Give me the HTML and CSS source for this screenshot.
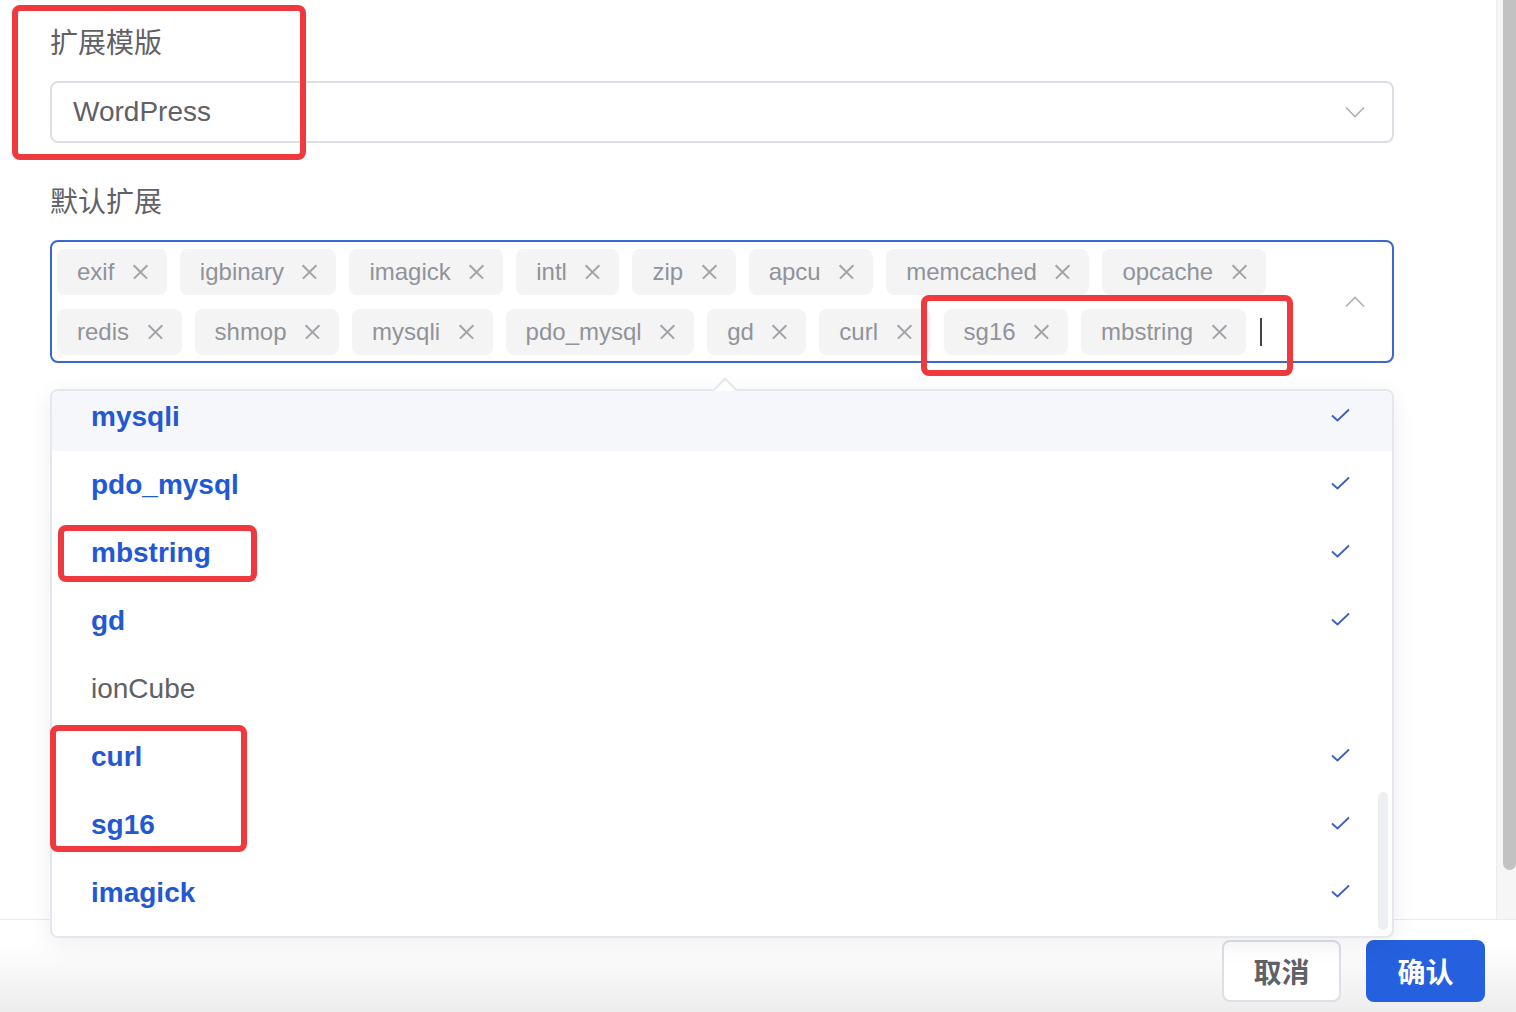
FILE: index.html
```html
<!DOCTYPE html>
<html lang="zh-CN">
<head>
    <meta charset="UTF-8">
    <title>扩展设置</title>
    <link rel="stylesheet" href="styles.css">
</head>
<body>
    <div class="dialog">
        <!-- 表单区 -->
        <div class="dialog-body">
            <div class="form">
                <div class="form-label">扩展模版</div>
                <div class="select">
                    <span class="select-value">WordPress</span>
                    <svg class="select-arrow" width="20" height="12" viewBox="0 0 20 12"><path d="M1 1.5L10 10.5L19 1.5" fill="none" stroke="#aeb1b6" stroke-width="1.6"/></svg>
                </div>

                <div class="form-label form-label-next">默认扩展</div>
                <div class="multi">
                    <div class="tags">
                        <span class="tag">exif<i class="tag-close"></i></span>
                        <span class="tag">igbinary<i class="tag-close"></i></span>
                        <span class="tag">imagick<i class="tag-close"></i></span>
                        <span class="tag">intl<i class="tag-close"></i></span>
                        <span class="tag">zip<i class="tag-close"></i></span>
                        <span class="tag">apcu<i class="tag-close"></i></span>
                        <span class="tag">memcached<i class="tag-close"></i></span>
                        <span class="tag">opcache<i class="tag-close"></i></span>
                        <span class="tag">redis<i class="tag-close"></i></span>
                        <span class="tag">shmop<i class="tag-close"></i></span>
                        <span class="tag">mysqli<i class="tag-close"></i></span>
                        <span class="tag">pdo_mysql<i class="tag-close"></i></span>
                        <span class="tag">gd<i class="tag-close"></i></span>
                        <span class="tag">curl<i class="tag-close"></i></span>
                        <span class="tag">sg16<i class="tag-close"></i></span>
                        <span class="tag">mbstring<i class="tag-close"></i></span>
                        <span class="cursor"></span>
                    </div>
                    <svg class="multi-arrow" width="20" height="12" viewBox="0 0 20 12"><path d="M1 10.5L10 1.5L19 10.5" fill="none" stroke="#aeb1b6" stroke-width="1.6"/></svg>

                    <!-- 下拉选项 -->
                    <div class="dropdown">
                        <div class="dropdown-arrow"></div>
                        <div class="options">
                            <div class="option selected hover">mysqli<svg class="check" width="19" height="14" viewBox="0 0 19 14"><path d="M1 7.5L6.5 12.5L18 1.5" fill="none" stroke="#3c5fbf" stroke-width="1.8"/></svg></div>
                            <div class="option selected">pdo_mysql<svg class="check" width="19" height="14" viewBox="0 0 19 14"><path d="M1 7.5L6.5 12.5L18 1.5" fill="none" stroke="#3c5fbf" stroke-width="1.8"/></svg></div>
                            <div class="option selected">mbstring<svg class="check" width="19" height="14" viewBox="0 0 19 14"><path d="M1 7.5L6.5 12.5L18 1.5" fill="none" stroke="#3c5fbf" stroke-width="1.8"/></svg></div>
                            <div class="option selected">gd<svg class="check" width="19" height="14" viewBox="0 0 19 14"><path d="M1 7.5L6.5 12.5L18 1.5" fill="none" stroke="#3c5fbf" stroke-width="1.8"/></svg></div>
                            <div class="option">ionCube</div>
                            <div class="option selected">curl<svg class="check" width="19" height="14" viewBox="0 0 19 14"><path d="M1 7.5L6.5 12.5L18 1.5" fill="none" stroke="#3c5fbf" stroke-width="1.8"/></svg></div>
                            <div class="option selected">sg16<svg class="check" width="19" height="14" viewBox="0 0 19 14"><path d="M1 7.5L6.5 12.5L18 1.5" fill="none" stroke="#3c5fbf" stroke-width="1.8"/></svg></div>
                            <div class="option selected">imagick<svg class="check" width="19" height="14" viewBox="0 0 19 14"><path d="M1 7.5L6.5 12.5L18 1.5" fill="none" stroke="#3c5fbf" stroke-width="1.8"/></svg></div>
                        </div>
                        <div class="dropdown-scroll"></div>
                    </div>
                </div>
            </div>
            <div class="scrollbar"><div class="scrollbar-thumb"></div></div>
        </div>

        <!-- 底部按钮 -->
        <div class="dialog-footer">
            <button class="btn">取消</button>
            <button class="btn btn-primary">确认</button>
        </div>

        <!-- 标注框 -->
        <div class="mark mark-template"></div>
        <div class="mark mark-tags"></div>
        <div class="mark mark-mbstring"></div>
        <div class="mark mark-curl"></div>
    </div>
</body>
</html>
```

FILE: styles.css
```css
* {
    box-sizing: border-box;
}
body {
    margin: 0;
    font-family: 'Liberation Sans', Arial, 'Noto Sans CJK SC', sans-serif;
    background: #fff;
    overflow: hidden;
}
.dialog {
    position: relative;
    width: 1516px;
    height: 1012px;
}
.dialog-body {
    display: flex;
    height: 920px;
    border-bottom: 1px solid #ebebeb;
}
.form {
    flex: 1;
    padding: 24px 0 0 50px;
}
.form-label {
    width: 1344px;
    font-size: 28px;
    line-height: 40px;
    color: #5f6166;
    margin-bottom: 17px;
}
.form-label-next {
    margin-top: 40px;
    margin-bottom: 17px;
}
.select {
    width: 1344px;
    height: 62px;
    border: 2px solid #dcdfe6;
    border-radius: 8px;
    display: flex;
    align-items: center;
    justify-content: space-between;
    padding: 0 27px 0 21px;
}
.select-value {
    font-size: 28px;
    color: #5f6166;
}
.multi {
    position: relative;
    width: 1344px;
    height: 123px;
    border: 2px solid #3b67d1;
    border-radius: 8px;
    display: flex;
    align-items: center;
    padding: 0 27px 0 5px;
}
.tags {
    flex: 1;
    display: flex;
    flex-wrap: wrap;
    align-items: center;
    gap: 14px 13px;
    padding-right: 40px;
}
.tag {
    display: flex;
    align-items: center;
    height: 46px;
    padding: 0 19px 0 20px;
    background: #f4f4f5;
    border-radius: 8px;
    font-size: 24px;
    color: #909399;
}
.tag-close {
    position: relative;
    width: 15px;
    height: 15px;
    margin-left: 18.5px;
}
.tag-close::before,
.tag-close::after {
    content: '';
    position: absolute;
    left: -2px;
    top: 7px;
    width: 19px;
    height: 1.5px;
    background: #a0a3a8;
    transform: rotate(45deg);
}
.tag-close::after {
    transform: rotate(-45deg);
}
.cursor {
    width: 2px;
    height: 28px;
    margin-left: 1px;
    background: #444;
}
.dropdown {
    position: absolute;
    left: -2px;
    top: calc(100% + 28px);
    width: 1344px;
    height: 549px;
    background: #fff;
    border: 2px solid #e4e7ed;
    border-radius: 8px;
    box-shadow: 0 6px 24px rgba(0, 0, 0, 0.07);
    z-index: 2;
}
.dropdown-arrow {
    position: absolute;
    left: 664px;
    top: -10px;
    width: 18px;
    height: 18px;
    background: #fff;
    border-top: 2px solid #e4e7ed;
    border-left: 2px solid #e4e7ed;
    transform: rotate(45deg);
}
.options {
    position: relative;
    height: 100%;
    overflow: hidden;
    border-radius: 8px;
}
.options .option:first-child {
    margin-top: -8px;
}
.option {
    display: flex;
    align-items: center;
    justify-content: space-between;
    height: 68px;
    padding: 0 42px 0 39px;
    font-size: 28px;
    color: #5f6166;
}
.option.selected {
    color: #2358d5;
    font-weight: bold;
}
.option.hover {
    background: #f5f7fa;
}
.check {
    margin-top: -4px;
}
.dropdown-scroll {
    position: absolute;
    right: 4px;
    top: 401px;
    width: 10px;
    height: 138px;
    background: #edeef1;
    border-radius: 5px;
}
.scrollbar {
    width: 20px;
    background: #f6f6f6;
    border-left: 1px solid #ececec;
    padding-left: 6px;
}
.scrollbar-thumb {
    height: 870px;
    background: #c2c2c2;
    border-radius: 0 0 7px 7px;
}
.dialog-footer {
    display: flex;
    justify-content: flex-end;
    gap: 25px;
    height: 92px;
    padding: 20px 31px 0 0;
    background: linear-gradient(to bottom, #fff 0%, #fff 25%, #ededed 100%);
}
.btn {
    width: 119px;
    height: 62px;
    border: 2px solid #dcdfe6;
    border-radius: 8px;
    background: #fff;
    font-family: 'Noto Sans CJK SC', sans-serif;
    font-size: 28px;
    font-weight: bold;
    color: #5f6166;
}
.btn-primary {
    background: #2560df;
    border-color: #2560df;
    color: #fff;
}
.mark {
    position: absolute;
    border: 6px solid #ee3a3e;
    border-radius: 8px;
    z-index: 5;
}
.mark-template {
    left: 12px;
    top: 5px;
    width: 294px;
    height: 155px;
}
.mark-tags {
    left: 921px;
    top: 295px;
    width: 372px;
    height: 81px;
}
.mark-mbstring {
    left: 58px;
    top: 525px;
    width: 199px;
    height: 57px;
}
.mark-curl {
    left: 50px;
    top: 725px;
    width: 197px;
    height: 127px;
}
```
